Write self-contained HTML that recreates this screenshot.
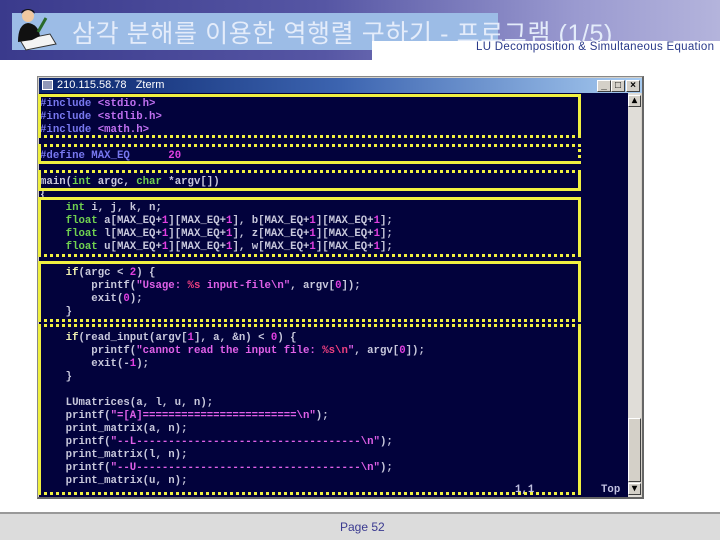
<!DOCTYPE html>
<html><head><meta charset="utf-8"><style>
*{margin:0;padding:0;box-sizing:border-box}
body{width:720px;height:540px;background:#fff;position:relative;overflow:hidden;font-family:"Liberation Sans",sans-serif}
.hdr{position:absolute;left:0;top:0;width:720px;height:60px;background:linear-gradient(90deg,#3a3a8c 0%,#5656a4 45%,#9a9ad0 80%,#b4b4dc 100%)}
.band{position:absolute;left:12px;top:13px;width:486px;height:37px;background:#9cbce6}
.title{position:absolute;left:72px;top:14px;font-size:25px;color:#e4ecfa;font-family:"Liberation Sans","Noto Sans CJK KR",sans-serif;white-space:nowrap;letter-spacing:0.6px}
.subw{position:absolute;left:372px;top:41px;width:348px;height:19px;background:#fff}
.sub{position:absolute;left:476px;top:41px;font-size:11.5px;color:#2a3a8a;white-space:nowrap;letter-spacing:0.3px}
.win{position:absolute;left:37px;top:76px;width:607px;height:423px;background:#d4d0c8;border:1px solid #888;border-right:2px solid #666;border-bottom:2px solid #666}
.tb{position:absolute;left:1px;top:1px;width:603px;height:15px;background:linear-gradient(90deg,#0a246a,#3c64b0 50%,#a6caf0)}
.tbt{position:absolute;left:18px;top:1px;color:#fff;font-size:11px;font-family:"Liberation Sans",sans-serif}
.ic{position:absolute;left:3px;top:2px;width:11px;height:10px;background:#9098b8;border:1px solid #fff}
.btn{position:absolute;top:2px;width:14px;height:12px;background:#d4d0c8;border:1px solid;border-color:#fff #404040 #404040 #fff;font-size:10px;font-weight:bold;text-align:center;line-height:10px;color:#000}
.term{position:absolute;left:1px;top:16px;width:589px;height:404px;background:#02023c}
.sb{position:absolute;left:590px;top:16px;width:13px;height:404px;background:#e0ddd8}
.code{position:absolute;font-family:"Liberation Mono",monospace;font-size:10.7px;line-height:13px;color:#c8c8dc;white-space:pre;font-weight:bold}
.y{position:absolute;border:3px solid #f0f040}
.pp{color:#7878f0}.hf{color:#c070f0}.kw{color:#70d050}.n{color:#e040e0}.s{color:#e060e8}.f{color:#f04080}.w{color:#f0f0b0}
.foot{position:absolute;left:0;top:512px;width:720px;height:28px;background:#dcdcdc;border-top:2px solid #999}
.pg{position:absolute;left:340px;top:520px;font-size:12px;color:#3a3a90}
</style></head><body>
<div class="hdr"></div>
<div class="band"></div>
<svg style="position:absolute;left:12px;top:6px" width="46" height="46" viewBox="0 0 46 46">
<polygon points="8,34 38,28 44,38 14,44" fill="#f4f4f4" stroke="#333"/>
<circle cx="16" cy="10" r="6" fill="#f0c8a0"/><path d="M9,8 Q16,0 23,8 L22,5 Q16,1 10,5Z" fill="#111"/>
<path d="M6,36 Q6,18 16,17 Q26,18 28,30 L20,34Z" fill="#111"/>
<path d="M26,26 L34,12" stroke="#2a6a2a" stroke-width="3"/>
</svg>
<div class="title">삼각 분해를 이용한 역행렬 구하기 - 프로그램 (1/5)</div>
<div class="subw"></div>
<div class="sub">LU Decomposition &amp; Simultaneous Equation</div>

<div class="win">
<div class="tb"><div class="ic"></div><div class="tbt">210.115.58.78 &nbsp; Zterm</div>
<div class="btn" style="left:558px">_</div><div class="btn" style="left:572px">□</div><div class="btn" style="left:587px">×</div></div>
<div class="term"></div>
<div class="sb"><div class="btn" style="left:0;top:2px;width:13px">▴</div><div style="position:absolute;left:0;top:325px;width:13px;height:64px;background:#d4d0c8;border:1px solid;border-color:#fff #404040 #404040 #fff"></div><div class="btn" style="left:0;top:390px;width:13px">▾</div></div>
</div>

<div class="code" style="left:40px;top:98px"><span class="pp">#include</span> <span class="hf">&lt;stdio.h&gt;</span>
<span class="pp">#include</span> <span class="hf">&lt;stdlib.h&gt;</span>
<span class="pp">#include</span> <span class="hf">&lt;math.h&gt;</span>

<span class="pp">#define MAX_EQ</span>      <span class="n">20</span>

main(<span class="kw">int</span> argc, <span class="kw">char</span> *argv[])
{
    <span class="kw">int</span> i, j, k, n;
    <span class="kw">float</span> a[MAX_EQ+<span class="n">1</span>][MAX_EQ+<span class="n">1</span>], b[MAX_EQ+<span class="n">1</span>][MAX_EQ+<span class="n">1</span>];
    <span class="kw">float</span> l[MAX_EQ+<span class="n">1</span>][MAX_EQ+<span class="n">1</span>], z[MAX_EQ+<span class="n">1</span>][MAX_EQ+<span class="n">1</span>];
    <span class="kw">float</span> u[MAX_EQ+<span class="n">1</span>][MAX_EQ+<span class="n">1</span>], w[MAX_EQ+<span class="n">1</span>][MAX_EQ+<span class="n">1</span>];

    <span class="w">if</span>(argc &lt; <span class="n">2</span>) {
        printf(<span class="s">"Usage: <span class="f">%s</span> input-file\n"</span>, argv[<span class="n">0</span>]);
        exit(<span class="n">0</span>);
    }

    <span class="w">if</span>(read_input(argv[<span class="n">1</span>], a, &amp;n) &lt; <span class="n">0</span>) {
        printf(<span class="s">"cannot read the input file: <span class="f">%s\n</span>"</span>, argv[<span class="n">0</span>]);
        exit(-<span class="n">1</span>);
    }

    LUmatrices(a, l, u, n);
    printf(<span class="s">"=[A]========================\n"</span>);
    print_matrix(a, n);
    printf(<span class="s">"--L-----------------------------------\n"</span>);
    print_matrix(l, n);
    printf(<span class="s">"--U-----------------------------------\n"</span>);
    print_matrix(u, n);</div>
<div class="code" style="left:515px;top:484px;color:#c0c0e0">1,1</div>
<div class="code" style="left:601px;top:484px;color:#c0c0e0">Top</div>

<div class="y" style="left:38px;top:94px;width:543px;height:44px;border-bottom-style:dotted"></div>
<div class="y" style="left:38px;top:144px;width:543px;height:20px;border-top-style:dotted;border-right-style:dotted"></div>
<div class="y" style="left:38px;top:170px;width:543px;height:21px;border-top-style:dotted"></div>
<div class="y" style="left:38px;top:197px;width:543px;height:60px;border-bottom-style:dotted"></div>
<div class="y" style="left:38px;top:261px;width:543px;height:61px;border-bottom-style:dotted"></div>
<div class="y" style="left:38px;top:324px;width:543px;height:171px;border-top-style:dotted;border-bottom-style:dotted"></div>

<div class="foot"></div>
<div class="pg">Page 52</div>
</body></html>
